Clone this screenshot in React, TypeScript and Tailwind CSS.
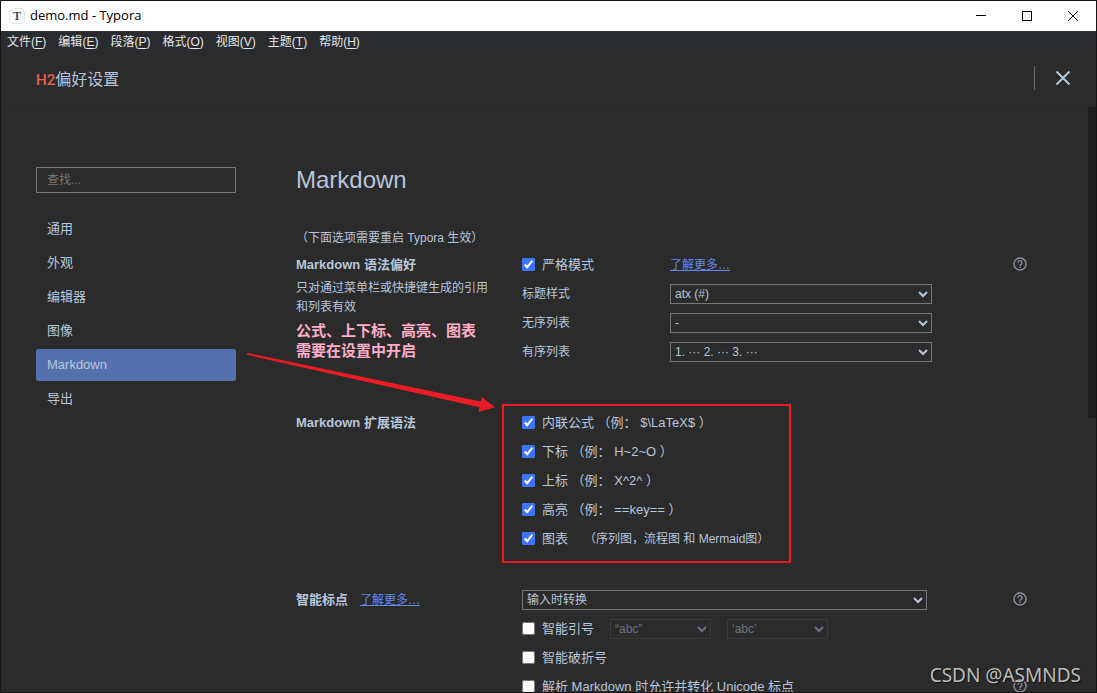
import type { ReactNode } from "react";
import { MdHelpOutline } from "react-icons/md";

const menus = [
  ["文件", "F"],
  ["编辑", "E"],
  ["段落", "P"],
  ["格式", "O"],
  ["视图", "V"],
  ["主题", "T"],
  ["帮助", "H"],
];

const categories = ["通用", "外观", "编辑器", "图像", "Markdown", "导出"];

const listStyles = [
  { id: "heading-style", label: "标题样式", value: "atx (#)" },
  { id: "bullet-style", label: "无序列表", value: "-" },
  { id: "ordered-style", label: "有序列表", value: "1. ··· 2. ··· 3. ···" },
];

const extensions = [
  "内联公式 （例： $\\LaTeX$ ）",
  "下标 （例： H~2~O ）",
  "上标 （例： X^2^ ）",
  "高亮 （例： ==key== ）",
];

function TitleBar() {
  return (
    <header className="flex h-[30px] shrink-0 items-center bg-white text-black">
      <span className="ml-2 flex size-4 items-center justify-center rounded-sm border border-gray-200 bg-gray-50 font-['Liberation_Serif',serif] text-xs font-bold text-gray-600">
        T
      </span>
      <h1 className="ml-[5px] flex-1 font-['Open_Sans',sans-serif] text-[13px]">demo.md - Typora</h1>
      <button aria-label="最小化" className="flex h-full w-[46px] items-center justify-center">
        <svg width="10" height="10" stroke="currentColor" shapeRendering="crispEdges">
          <path d="M0 4.5H10" />
        </svg>
      </button>
      <button aria-label="最大化" className="flex h-full w-[46px] items-center justify-center">
        <svg width="10" height="10" stroke="currentColor" fill="none" shapeRendering="crispEdges">
          <rect x="0.5" y="0.5" width="9" height="9" />
        </svg>
      </button>
      <button aria-label="关闭" className="flex h-full w-[46px] items-center justify-center">
        <svg width="10" height="10" stroke="currentColor">
          <path d="M0 0L10 10M10 0L0 10" />
        </svg>
      </button>
    </header>
  );
}

function Check({ children, checked = false }: { children: ReactNode; checked?: boolean }) {
  return (
    <label className="flex h-[29px] items-center gap-[7px] whitespace-nowrap text-[13px] leading-[13px]">
      <input type="checkbox" defaultChecked={checked} className="size-[13px] shrink-0 accent-[#3b74fb]" />
      <span>{children}</span>
    </label>
  );
}

function Help() {
  return (
    <button aria-label="帮助" className="flex h-7 items-center text-[#8d96a6]">
      <MdHelpOutline size={16} />
    </button>
  );
}

function LearnMore() {
  return (
    <a href="#more" className="text-xs font-normal text-[#6189f5] underline">
      了解更多…
    </a>
  );
}

const selectClass = "h-5 border border-[#767676] bg-[#2b2b2b] text-xs disabled:border-[#3b3b3b] disabled:text-[#6c7380] disabled:opacity-100";
const sectionClass = "relative grid grid-cols-[226px_1fr_auto] items-start";

export default function App() {
  return (
    <div className="flex h-screen flex-col overflow-hidden border border-[#171516] bg-[#2b2b2b] font-['Liberation_Sans','Noto_Sans_CJK_SC',sans-serif] text-[#b8c6dc]">
      <TitleBar />
      <nav className="flex h-[22px] shrink-0 items-center gap-3 bg-[#292b2e] px-1.5 text-xs text-[#e4e6e8]">
        {menus.map(([name, key]) => (
          <button key={key}>
            {name}(<u className="underline-offset-2">{key}</u>)
          </button>
        ))}
      </nav>
      <div className="flex h-[54px] shrink-0 items-center border-b border-[#272727] pr-[25px] pl-[35px]">
        <h2 className="flex-1 text-base">
          <span className="font-['Roboto',sans-serif] text-[15px] font-medium text-[#e8604f]">H2</span>偏好设置
        </h2>
        <button
          aria-label="关闭偏好设置"
          className="mt-[13px] flex h-6 items-center self-start border-l border-[#6b6b6b] pl-5"
        >
          <svg width="16" height="16" fill="none" stroke="currentColor" strokeWidth="2">
            <path d="M1.5 1.5L14.5 14.5M14.5 1.5L1.5 14.5" />
          </svg>
        </button>
      </div>

      <div className="flex min-h-0 flex-1">
        <div className="flex min-w-0 flex-1 gap-[60px] overflow-hidden pt-[60px] pr-[60px] pl-[35px]">
          <aside className="w-[200px] shrink-0">
            <input
              type="search"
              aria-label="查找"
              placeholder="查找..."
              className="mb-5 block h-[26px] w-full border border-[#767676] px-2.5 text-xs placeholder:text-[#757575]"
            />
            <ul className="flex flex-col gap-0.5 text-[13px]">
              {categories.map((name) => (
                <li key={name}>
                  <button
                    className={
                      name === "Markdown"
                        ? "flex h-8 w-full items-center rounded-xs bg-[#5570ae] px-[11px]"
                        : "flex h-8 w-full items-center px-[11px]"
                    }
                  >
                    {name}
                  </button>
                </li>
              ))}
            </ul>
          </aside>

          <main className="min-w-0 flex-1">
            <h2 className="mt-[-5px] mb-[30px] text-2xl leading-9">Markdown</h2>
            <p className="mb-0.5 text-xs leading-5">（下面选项需要重启 Typora 生效）</p>

            <section className={sectionClass}>
              <div>
                <h3 className="text-[13px] leading-[29px] font-bold">Markdown 语法偏好</h3>
                <p className="w-[200px] text-xs leading-[19px]">只对通过菜单栏或快捷键生成的引用和列表有效</p>
                <p className="mt-1 text-[15px] leading-5 font-bold text-[#ffaec9]">
                  公式、上下标、高亮、图表
                  <br />
                  需要在设置中开启
                </p>
              </div>
              <div>
                <div className="grid grid-cols-[148px_1fr] items-center">
                  <Check checked>严格模式</Check>
                  <LearnMore />
                </div>
                {listStyles.map((row) => (
                  <div key={row.id} className="grid h-[29px] grid-cols-[148px_262px] items-center">
                    <label htmlFor={row.id} className="text-xs">
                      {row.label}
                    </label>
                    <select id={row.id} className={selectClass}>
                      <option>{row.value}</option>
                    </select>
                  </div>
                ))}
              </div>
              <Help />
            </section>

            <section className={`${sectionClass} mt-[42px]`}>
              <h3 className="text-[13px] leading-[29px] font-bold">Markdown 扩展语法</h3>
              <div className="relative">
                {extensions.map((text) => (
                  <Check key={text} checked>
                    {text}
                  </Check>
                ))}
                <Check checked>
                  图表<span className="ml-4 text-xs">（序列图，流程图 和 Mermaid图）</span>
                </Check>
                <div className="pointer-events-none absolute -top-1 -left-5 h-[159px] w-[289px] border-2 border-[#ed1c24]" />
              </div>
              <svg
                className="pointer-events-none absolute -top-[55px] -left-[49px]"
                width="250"
                height="60"
                fill="#ed1c24"
              >
                <path d="M0 .2L.8 0L233.5 48.5L235 44.3L248 54.3L231.5 59L232.5 54.2L0 1.8Z" />
              </svg>
            </section>

            <section className={`${sectionClass} mt-8`}>
              <h3 className="flex items-center gap-3 text-[13px] leading-[29px] font-bold">
                智能标点
                <LearnMore />
              </h3>
              <div>
                <div className="flex h-[29px] items-center">
                  <select aria-label="智能标点" className={`${selectClass} w-[405px]`}>
                    <option>输入时转换</option>
                  </select>
                </div>
                <div className="flex items-center gap-4">
                  <Check>智能引号</Check>
                  <select disabled aria-label="双引号" className={`${selectClass} w-[101px]`}>
                    <option>“abc”</option>
                  </select>
                  <select disabled aria-label="单引号" className={`${selectClass} w-[101px]`}>
                    <option>‘abc’</option>
                  </select>
                </div>
                <Check>智能破折号</Check>
                <Check>解析 Markdown 时允许并转化 Unicode 标点</Check>
              </div>
              <div className="flex flex-col gap-[59px]">
                <Help />
                <Help />
              </div>
            </section>
          </main>
        </div>
        <div className="w-2 shrink-0">
          <div className="h-[311px] bg-[#1e1e1e]" />
        </div>
      </div>
      <p className="pointer-events-none absolute right-4 bottom-1 font-['Noto_Sans',sans-serif] text-[19px] leading-7 text-[#bdbdbd] [text-shadow:1px_1px_1px_#111]">
        CSDN @ASMNDS
      </p>
    </div>
  );
}
